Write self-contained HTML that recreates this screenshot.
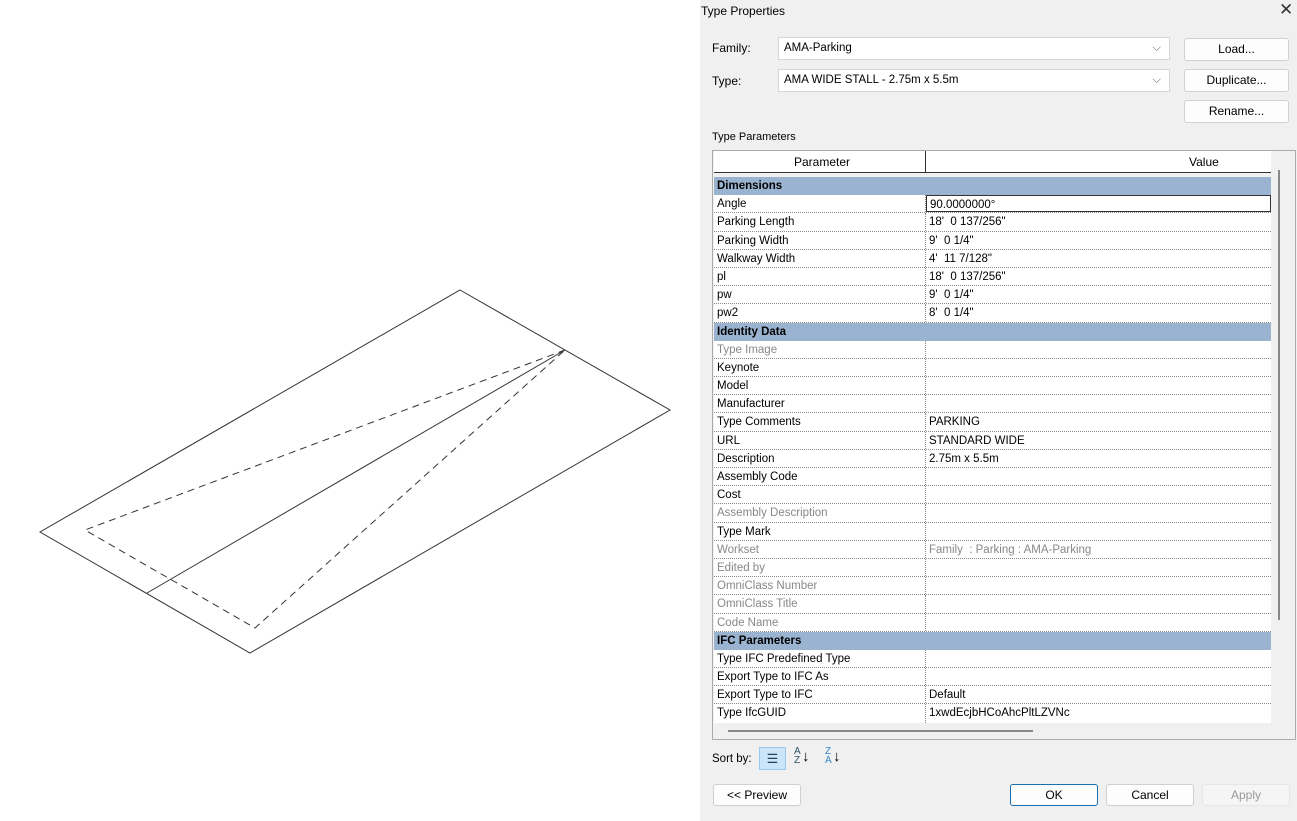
<!DOCTYPE html>
<html><head><style>
body{margin:0;width:1297px;height:821px;position:relative;overflow:hidden;background:#fff;font-family:"Liberation Sans",sans-serif;font-size:12px;color:#000}
.dlg{position:absolute;left:700px;top:0;width:597px;height:821px;background:#f0f0f0}
.a{position:absolute}
.btn{position:absolute;background:#fdfdfd;border:1px solid #d0d0d0;border-radius:3px;text-align:center;box-sizing:border-box;font-size:12px}
.combo{position:absolute;background:#fff;border:1px solid #d6d6d6;box-sizing:border-box;padding-left:5px;font-size:11.5px}
.rows{position:absolute;left:714px;top:177px;width:557px}
.r{height:18.2px;box-sizing:border-box;border-bottom:1px dotted #888;display:flex;background:#fff;line-height:18px;font-size:11.5px}
.r .p{width:208px;padding-left:3px;border-right:1px dotted #888}
.r .v{padding-left:3px;flex:1}
.g{background:#9ab3d0;font-weight:bold;border-bottom:none;padding-left:3px}
.gr{color:#888}
</style></head><body>
<svg class="a" style="left:0;top:0" width="700" height="821">
<g fill="none" stroke="#333" stroke-width="1">
<polygon points="460,290 670,410 250,653 40,532"/>
<line x1="565" y1="350" x2="147" y2="593"/>
<polyline points="565,350 85,530 255,628 565,350" stroke-dasharray="7,5"/>
</g></svg>
<div class="dlg"></div>
<div class="a" style="left:701px;top:4px;font-size:12px">Type Properties</div>
<div class="a" style="left:1279px;top:0;font-size:17px;color:#333">✕</div>
<div class="a" style="left:712px;top:41px">Family:</div>
<div class="a" style="left:712px;top:74px">Type:</div>
<div class="combo" style="left:778px;top:37px;width:392px;height:23px;line-height:21px">AMA-Parking<span style="position:absolute;right:8px;color:#777">⌵</span></div>
<div class="combo" style="left:778px;top:69px;width:392px;height:23px;line-height:21px">AMA WIDE STALL - 2.75m x 5.5m<span style="position:absolute;right:8px;color:#777">⌵</span></div>
<div class="btn" style="left:1184px;top:38px;width:105px;height:23px;line-height:21px">Load...</div>
<div class="btn" style="left:1184px;top:69px;width:105px;height:23px;line-height:21px">Duplicate...</div>
<div class="btn" style="left:1184px;top:100px;width:105px;height:23px;line-height:21px">Rename...</div>
<div class="a" style="left:712px;top:131px;font-size:11px">Type Parameters</div>
<div class="a" style="left:712px;top:150px;width:584px;height:590px;border:1px solid #aaa;box-sizing:border-box;background:#f0f0f0"></div>
<div class="a" style="left:714px;top:151px;width:557px;height:22px;background:#fff;border-bottom:1px solid #333;box-sizing:border-box"></div>
<div class="a" style="left:925px;top:151px;width:1px;height:22px;background:#333"></div>
<div class="a" style="left:794px;top:155px">Parameter</div>
<div class="a" style="left:1189px;top:155px">Value</div>
<div class="a" style="left:1278px;top:170px;width:2px;height:450px;background:#888"></div>
<div class="rows">
<div class="r g">Dimensions</div>
<div class="r"><div class="p">Angle</div><div class="v" style="border:1px solid #333">90.0000000°</div></div>
<div class="r"><div class="p">Parking Length</div><div class="v">18'&nbsp; 0 137/256"</div></div>
<div class="r"><div class="p">Parking Width</div><div class="v">9'&nbsp; 0 1/4"</div></div>
<div class="r"><div class="p">Walkway Width</div><div class="v">4'&nbsp; 11 7/128"</div></div>
<div class="r"><div class="p">pl</div><div class="v">18'&nbsp; 0 137/256"</div></div>
<div class="r"><div class="p">pw</div><div class="v">9'&nbsp; 0 1/4"</div></div>
<div class="r"><div class="p">pw2</div><div class="v">8'&nbsp; 0 1/4"</div></div>
<div class="r g">Identity Data</div>
<div class="r gr"><div class="p">Type Image</div><div class="v"></div></div>
<div class="r"><div class="p">Keynote</div><div class="v"></div></div>
<div class="r"><div class="p">Model</div><div class="v"></div></div>
<div class="r"><div class="p">Manufacturer</div><div class="v"></div></div>
<div class="r"><div class="p">Type Comments</div><div class="v">PARKING</div></div>
<div class="r"><div class="p">URL</div><div class="v">STANDARD WIDE</div></div>
<div class="r"><div class="p">Description</div><div class="v">2.75m x 5.5m</div></div>
<div class="r"><div class="p">Assembly Code</div><div class="v"></div></div>
<div class="r"><div class="p">Cost</div><div class="v"></div></div>
<div class="r gr"><div class="p">Assembly Description</div><div class="v"></div></div>
<div class="r"><div class="p">Type Mark</div><div class="v"></div></div>
<div class="r gr"><div class="p">Workset</div><div class="v">Family&nbsp; : Parking : AMA-Parking</div></div>
<div class="r gr"><div class="p">Edited by</div><div class="v"></div></div>
<div class="r gr"><div class="p">OmniClass Number</div><div class="v"></div></div>
<div class="r gr"><div class="p">OmniClass Title</div><div class="v"></div></div>
<div class="r gr"><div class="p">Code Name</div><div class="v"></div></div>
<div class="r g">IFC Parameters</div>
<div class="r"><div class="p">Type IFC Predefined Type</div><div class="v"></div></div>
<div class="r"><div class="p">Export Type to IFC As</div><div class="v"></div></div>
<div class="r"><div class="p">Export Type to IFC</div><div class="v">Default</div></div>
<div class="r" style="border-bottom:none"><div class="p">Type IfcGUID</div><div class="v">1xwdEcjbHCoAhcPltLZVNc</div></div>
</div>
<div class="a" style="left:728px;top:730px;width:305px;height:2px;background:#888"></div>
<div class="a" style="left:712px;top:753px;font-size:11.5px">Sort by:</div>
<div class="a" style="left:759px;top:747px;width:27px;height:23px;background:#cce4f7;border:1px solid #99c9ef;box-sizing:border-box;text-align:center;line-height:21px;color:#245;font-size:13px">☰</div>
<div class="a" style="left:794px;top:747px;font-size:10px;line-height:9px;color:#356">A<br>Z</div><div class="a" style="left:802px;top:748px;font-size:15px">↓</div>
<div class="a" style="left:825px;top:747px;font-size:10px;line-height:9px;color:#38c">Z<br>A</div><div class="a" style="left:833px;top:748px;font-size:15px">↓</div>
<div class="btn" style="left:713px;top:784px;width:88px;height:22px;line-height:20px">&lt;&lt; Preview</div>
<div class="btn" style="left:1010px;top:784px;width:88px;height:22px;line-height:20px;border:1px solid #1a6fb0">OK</div>
<div class="btn" style="left:1106px;top:784px;width:88px;height:22px;line-height:20px">Cancel</div>
<div class="btn" style="left:1202px;top:784px;width:88px;height:22px;line-height:20px;color:#999;background:#f5f5f5;border-color:#e6e6e6">Apply</div>
</body></html>
